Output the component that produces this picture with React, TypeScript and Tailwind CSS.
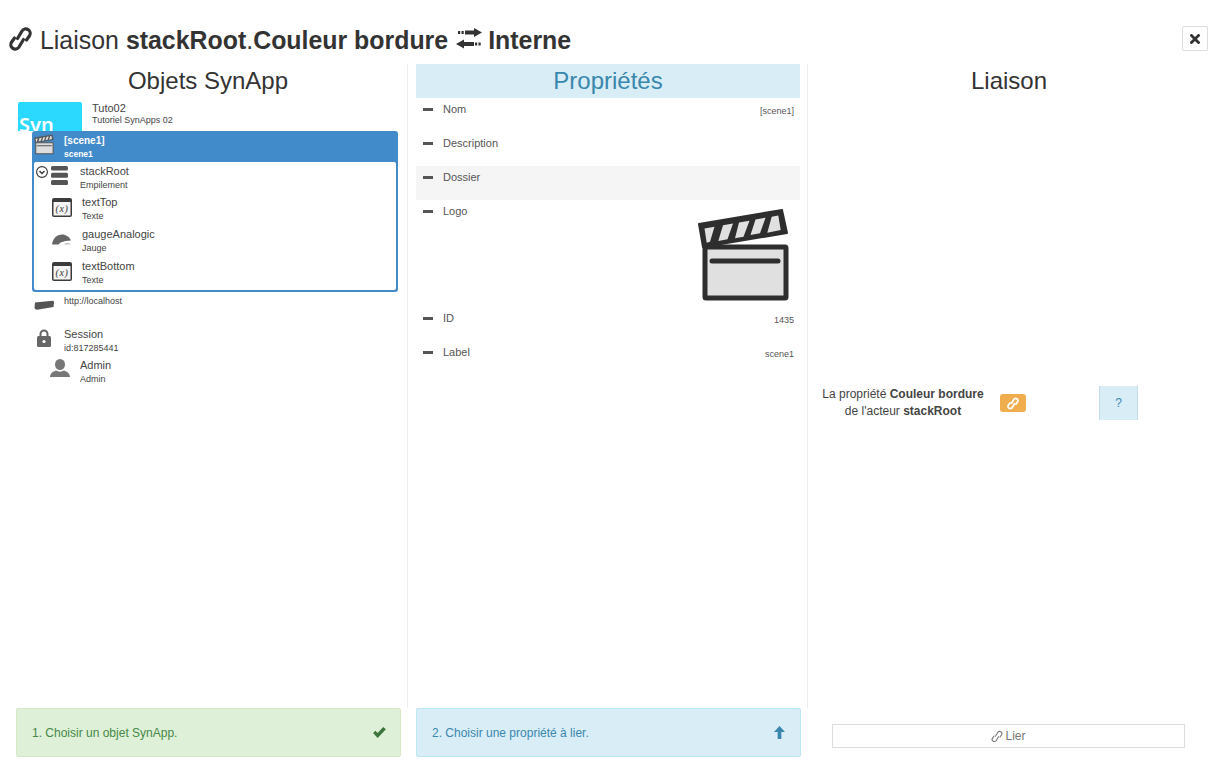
import type { ReactNode } from "react";

const SANS = "font-['Liberation_Sans',Arial,sans-serif]";

function LinkIcon({ className, sw = 3.2 }: { className?: string; sw?: number }) {
  return (
    <svg viewBox="0 0 24 26" fill="none" stroke="currentColor" strokeWidth={sw} strokeLinecap="round" strokeLinejoin="round" className={className}>
      <path d="M9 12.500 13.500 5A4.400 4.400 0 0 1 21 9.800L18 14" />
      <path d="M15 13.500 10.500 21A4.400 4.400 0 0 1 3 16.200L6 12" />
    </svg>
  );
}

function TransferIcon() {
  return (
    <svg viewBox="0 0 26 21" className="h-[21px] w-[26px]" fill="#333">
      <path d="M9 2.500h9V0l8 4.500-8 4.500V6.500H9z" />
      <rect x="2" y="3" width="2.200" height="3" />
      <rect x="5.500" y="3" width="2.200" height="3" />
      <path d="M18 14h-10v-2.500l-8 4.500 8 4.500V18h10z" />
      <rect x="19" y="14.500" width="2.200" height="3" />
      <rect x="22.500" y="14.500" width="2.200" height="3" />
    </svg>
  );
}

function Clapper({ className, dark = "#2e2e2e", light = "#e0e0e0" }: { className?: string; dark?: string; light?: string }) {
  return (
    <svg viewBox="0 0 93 92" className={className}>
      <path d="M2 15 85 1l5 23-84 14z" fill={dark} stroke={dark} strokeWidth="2" strokeLinejoin="round" />
      <path d="M7.500 19.500l10-1.800-4.500 15-3.300 1zM26 16.300l10-1.800-5.500 15.800-9.200 1.700zM42 13.500l10.500-1.800-6 16-8.500 1.600zM58.500 10.500l10-1.800-5.500 15.600-9.500 1.700zM74.700 7.700l6.600-1.200 2.400 14.500-13.400 2.700z" fill={light} />
      <rect x="8" y="38" width="81" height="51" rx="1" fill={light} stroke={dark} strokeWidth="5" />
      <path d="M15 52h66" stroke={dark} strokeWidth="5" strokeLinecap="round" />
    </svg>
  );
}

function StackIcon() {
  return (
    <svg viewBox="0 0 17 19" className="h-[19px] w-[17px]" fill="#555">
      <rect x="0" y="0" width="17" height="4.500" rx="1.500" />
      <rect x="0" y="6.800" width="17" height="5" rx="1.500" />
      <rect x="0" y="14" width="17" height="5" rx="1.500" />
    </svg>
  );
}

function TextIcon() {
  return (
    <svg viewBox="0 0 20 19" className="h-[19px] w-[20px]">
      <rect x="0" y="0" width="20" height="19" rx="2" fill="#3c3c3c" />
      <rect x="1.500" y="4" width="17" height="13.500" rx="0.500" fill="#f4f4f4" />
      <text x="10" y="14.200" textAnchor="middle" fontSize="10" fontStyle="italic" fontFamily="Liberation Serif, serif" fill="#333" letterSpacing="0.6">
        (x)
      </text>
    </svg>
  );
}

function GaugeIcon() {
  return (
    <svg viewBox="0 0 20 11" className="h-[11px] w-[20px]" fill="#666">
      <path d="M0 10.500C1 4 5 .5 10 .5c4 0 7.500 2.500 9 6l-5.500 .5-5 1.500-2 2z" />
      <path d="M13 9.500c1.500-.8 3.500-.8 6 1h-7z" fill="#bbb" />
    </svg>
  );
}

function ServerIcon() {
  return (
    <svg viewBox="0 0 20 10" className="h-[10px] w-[20px]" fill="#555">
      <path d="M1 2.500 18.500 .8Q20 .8 20 2.200L19.500 7 3 9.800Q1 9.800 .5 8z" />
    </svg>
  );
}

function LockIcon() {
  return (
    <svg viewBox="0 0 14 18" className="h-[18px] w-[14px]">
      <path d="M3.500 8V5a3.500 3.500 0 0 1 7 0v3" fill="none" stroke="#666" strokeWidth="2" />
      <rect x="0" y="7" width="14" height="11" rx="1.500" fill="#666" />
      <circle cx="7" cy="12.500" r="1.600" fill="#fff" />
    </svg>
  );
}

function UserIcon() {
  return (
    <svg viewBox="0 0 20 18" className="h-[18px] w-[20px]" fill="#777">
      <ellipse cx="10" cy="5.500" rx="5" ry="5.500" />
      <path d="M0 18c0-3.500 3-5.500 6-6.500 2.500 1.500 5.500 1.500 8 0 3 1 6 3 6 6.500z" />
    </svg>
  );
}

function Chevron() {
  return (
    <svg viewBox="0 0 12 12" className="h-[12px] w-[12px]" fill="none" stroke="#333" strokeWidth="1.100">
      <circle cx="6" cy="6" r="5.400" />
      <path d="M3.500 5 6 7.500 8.500 5" strokeWidth="1.300" />
    </svg>
  );
}

function Lines({ name, sub, tight }: { name: string; sub: string; tight?: boolean }) {
  return (
    <div className="flex flex-col">
      <span className={`text-[11px] text-[#444] ${tight ? "leading-[12px]" : "leading-[14px]"}`}>{name}</span>
      <span className={`text-[9px] text-[#444] ${tight ? "leading-[12px]" : "leading-[14px]"}`}>{sub}</span>
    </div>
  );
}

function Row({ h, slot, name, sub }: { h: string; slot: ReactNode; name: string; sub: string }) {
  return (
    <div className={`flex ${h}`}>
      {slot}
      <Lines name={name} sub={sub} />
    </div>
  );
}

function Prop({ label, value, className, children }: { label: string; value?: string; className?: string; children?: ReactNode }) {
  return (
    <div className={`flex justify-between pr-[6px] ${className ?? "h-[34px]"}`}>
      <div className="flex h-[22px] items-center pt-[1px]">
        <span className="ml-[7px] h-[3px] w-[10px] bg-[#555]" />
        <span className="ml-[10px] text-[11px] text-[#555]">{label}</span>
      </div>
      {value && <span className="pt-[6px] text-[9px] leading-[14px] text-[#555]">{value}</span>}
      {children}
    </div>
  );
}

export default function App() {
  return (
    <div className={`${SANS} flex h-[767px] w-[1215px] flex-col overflow-hidden bg-white pl-2 pr-[7px] text-[#333]`}>
      <header className="flex h-[64px] shrink-0 justify-between">
        <h1 className="flex h-[64px] items-center whitespace-nowrap pt-[18px] text-[24.9px] text-[#333]">
          <LinkIcon className="h-[26px] w-[25px] -translate-y-[2px]" />
          <span className="ml-[7px]">Liaison</span>
          <span className="ml-[7px] font-bold">stackRoot</span>.<span className="font-bold">Couleur bordure</span>
          <span className="ml-[8px] -translate-y-[3px]">
            <TransferIcon />
          </span>
          <span className="ml-[6px] font-bold">Interne</span>
        </h1>
        <button className="mt-[26px] flex h-[25px] w-[26px] items-center justify-center rounded-[2px] border border-[#ddd] bg-white">
          <svg viewBox="0 0 10 10" className="h-[10px] w-[10px]" stroke="#333" strokeWidth="2.800" strokeLinecap="square">
            <path d="M1.500 1.500l7 7M8.500 1.500l-7 7" />
          </svg>
        </button>
      </header>

      <main className="flex h-[644px] shrink-0">
        {/* objets */}
        <section className="h-full w-[400px] border-r border-[#eee] pl-2 pr-[7px]">
          <h2 className="h-[34px] text-center text-[24px] leading-[34px]">Objets SynApp</h2>
          <div className="ml-[2px] mt-[4px] flex h-[29px]">
            <div className="h-[29px] w-[64px] overflow-hidden rounded-t-[2px] bg-[#2bd9ff] pl-[1px] pt-[9px] font-['Noto_Sans',sans-serif] text-[20px] font-semibold leading-[27px] text-white">
              Syn
            </div>
            <div className="ml-[10px]">
              <Lines name="Tuto02" sub="Tutoriel SynApps 02" tight />
            </div>
          </div>

          <div className="ml-4 w-[366px] rounded-[3px] border-2 border-[#428bca] bg-[#428bca]">
            <div className="flex h-[29px] text-white">
              <Clapper className="mt-[1px] h-[21px] w-[20px]" dark="#555" light="#ddd" />
              <div className="ml-[10px] flex flex-col font-bold">
                <span className="pt-[1px] text-[10px] leading-[14px]">[scene1]</span>
                <span className="text-[8.5px] leading-[13px]">scene1</span>
              </div>
            </div>
            <div className="rounded-[2px] bg-white pt-[2px]">
              <Row
                h="h-[31px]"
                name="stackRoot"
                sub="Empilement"
                slot={
                  <div className="ml-[2px] mr-[12px] flex w-[32px] items-start gap-[3px] pt-[2px]">
                    <Chevron />
                    <StackIcon />
                  </div>
                }
              />
              <Row h="h-[32px]" name="textTop" sub="Texte" slot={<div className="ml-[18px] mr-[10px] pt-[3px]"><TextIcon /></div>} />
              <Row h="h-[32px]" name="gaugeAnalogic" sub="Jauge" slot={<div className="ml-[18px] mr-[10px] pt-[7px]"><GaugeIcon /></div>} />
              <Row h="h-[31px]" name="textBottom" sub="Texte" slot={<div className="ml-[18px] mr-[10px] pt-[3px]"><TextIcon /></div>} />
            </div>
          </div>

          <div className="ml-[18px] flex h-[35px] pt-[2px]">
            <div className="mr-[10px] pt-[6px]"><ServerIcon /></div>
            <span className="text-[9px] leading-[14px] text-[#444]">http://localhost</span>
          </div>
          <Row h="h-[31px] ml-[21px]" name="Session" sub="id:817285441" slot={<div className="mr-[13px] pt-[2px]"><LockIcon /></div>} />
          <Row h="h-[31px] ml-[34px]" name="Admin" sub="Admin" slot={<div className="mr-[10px] pt-[1px]"><UserIcon /></div>} />
        </section>

        {/* propriétés */}
        <section className="h-full w-[400px] border-r border-[#eee] pl-2 pr-[7px]">
          <h2 className="h-[34px] bg-[#d9edf7] text-center text-[24px] leading-[34px] text-[#3a87ad]">Propriétés</h2>
          <Prop label="Nom" value="[scene1]" />
          <Prop label="Description" />
          <Prop label="Dossier" className="h-[34px] bg-[#f5f5f5]" />
          <Prop label="Logo" className="h-[107px]">
            <Clapper className="mr-[4px] mt-[9px] h-[92px] w-[93px]" />
          </Prop>
          <Prop label="ID" value="1435" />
          <Prop label="Label" value="scene1" />
        </section>

        {/* liaison */}
        <section className="h-full w-[400px] pl-[9px] pr-[7px]">
          <h2 className="h-[34px] text-center text-[24px] leading-[34px]">Liaison</h2>
          <div className="ml-[5px] mt-[288px] flex h-[34px] items-center">
            <p className="w-[162px] text-center text-[12px] leading-[17px] text-[#444]">
              La propriété <span className="font-bold">Couleur bordure</span>
              <br />
              de l'acteur <span className="font-bold">stackRoot</span>
            </p>
            <span className="ml-[16px] flex h-[18px] w-[26px] items-center justify-center rounded-[3px] bg-[#f0ad4e] text-white">
              <LinkIcon className="h-[13px] w-[12px]" sw={3.6} />
            </span>
            <span className="ml-[73px] flex h-[34px] w-[39px] items-center justify-center border-x border-[#c5dde8] bg-[#d9edf7] text-[12px] text-[#3a87ad]">
              ?
            </span>
          </div>
        </section>
      </main>

      <footer className="flex h-[49px] shrink-0 text-[12px]">
        <div className="ml-2 flex h-[49px] w-[385px] items-center justify-between rounded-[2px] border border-[#d6e9c6] bg-[#dff0d8] pl-[15px] pr-[14px] text-[#468847]">
          <span>1. Choisir un objet SynApp.</span>
          <svg viewBox="0 0 14 12" className="h-[11px] w-[13px]" fill="#3c763d">
            <path d="M0 6.500 2.500 4l2.500 2.500L11 0l3 2.500L5 12z" />
          </svg>
        </div>
        <div className="ml-[15px] flex h-[49px] w-[385px] items-center justify-between rounded-[2px] border border-[#bce8f1] bg-[#d9edf7] pl-[15px] pr-[15px] text-[#3a87ad]">
          <span>2. Choisir une propriété à lier.</span>
          <svg viewBox="0 0 12 14" className="h-[13px] w-[11px]" fill="#3a87ad">
            <path d="M6 0l6 6.500H8V14H4V6.500H0z" />
          </svg>
        </div>
        <button className="ml-[31px] mt-[16px] flex h-[24px] w-[353px] items-center justify-center gap-[2px] border border-[#ddd] bg-white text-[#777]">
          <LinkIcon className="h-[13px] w-[12px]" sw={2.2} />
          Lier
        </button>
      </footer>
    </div>
  );
}
